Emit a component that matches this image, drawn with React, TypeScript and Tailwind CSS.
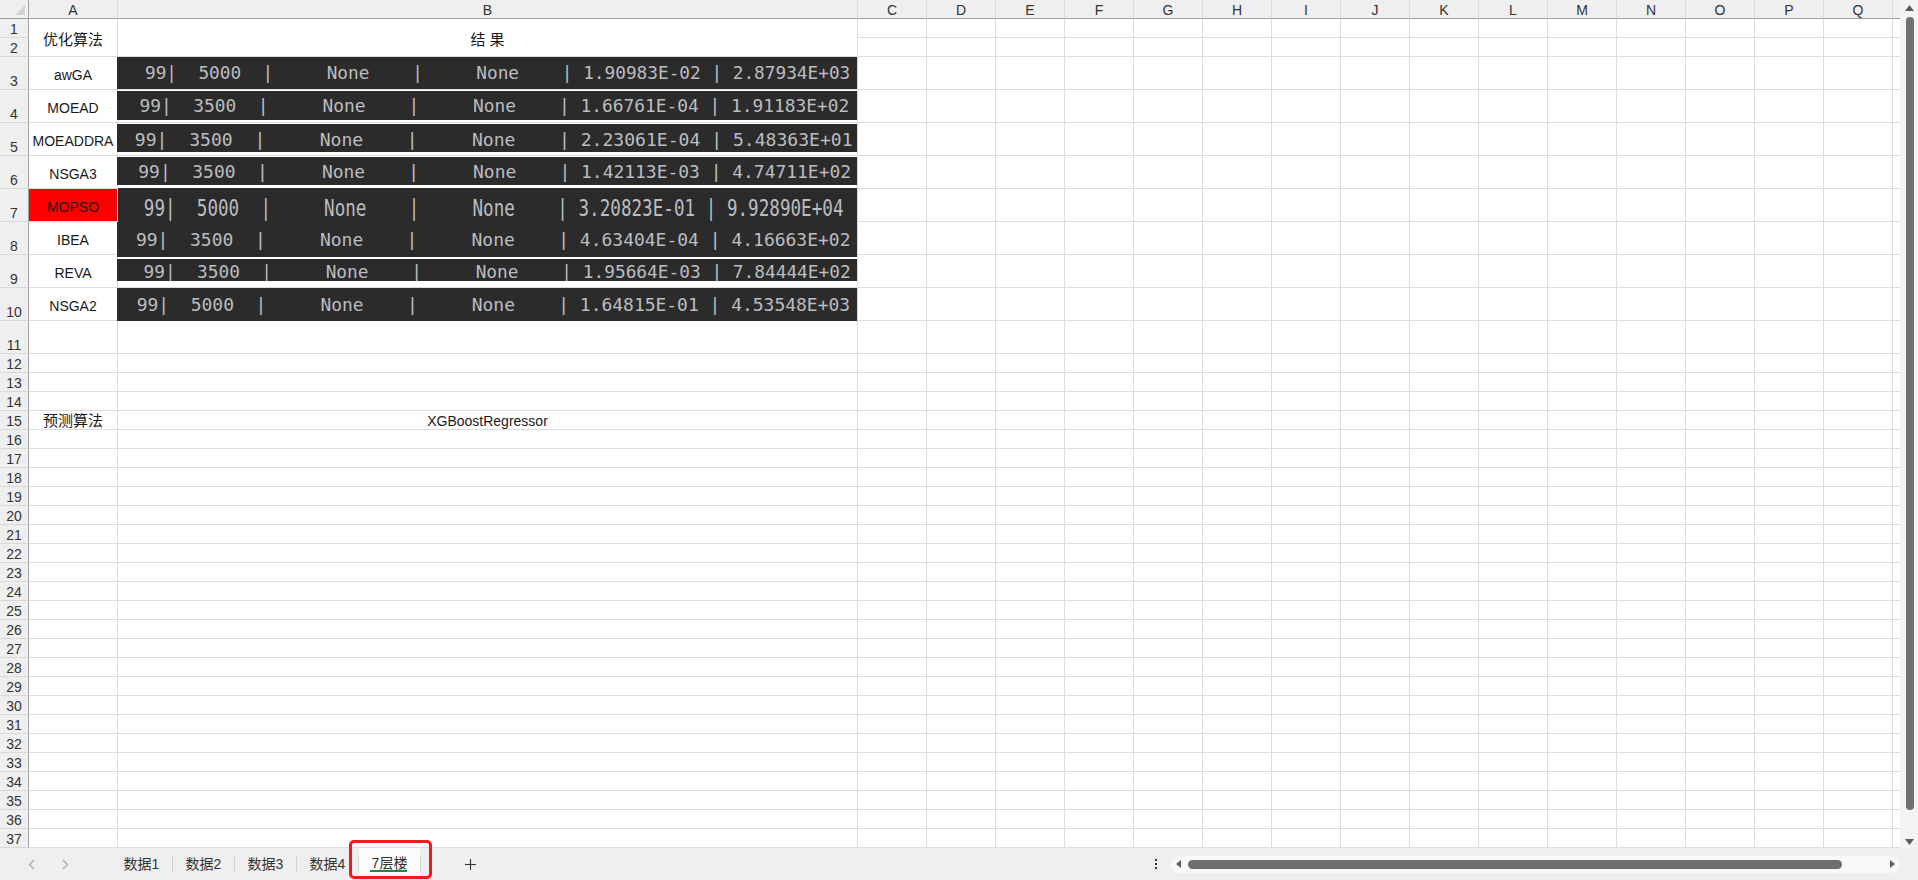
import React from "react";

const LETTERS = ["C", "D", "E", "F", "G", "H", "I", "J", "K", "L", "M", "N", "O", "P", "Q"];

const LABELS: Record<number, string> = {
  3: "awGA",
  4: "MOEAD",
  5: "MOEADDRA",
  6: "NSGA3",
  7: "MOPSO",
  8: "IBEA",
  9: "REVA",
  10: "NSGA2",
};

type Pic = { box: string; txt: string; pre: string; s: string };

const PICS: Pic[] = [
  {
    box: "left-[117px] top-[57px] w-[740px] h-[32px]",
    txt: "pl-[28px] pt-[8.2px]",
    pre: "text-[17.75px]",
    s: "99|  5000  |     None    |     None    | 1.90983E-02 | 2.87934E+03",
  },
  {
    box: "left-[117px] top-[91px] w-[740px] h-[29px]",
    txt: "pl-[22.6px] pt-[5.7px]",
    pre: "text-[17.88px]",
    s: "99|  3500  |     None    |     None    | 1.66761E-04 | 1.91183E+02",
  },
  {
    box: "left-[117px] top-[124px] w-[740px] h-[28px]",
    txt: "pl-[17.8px] pt-[6.8px]",
    pre: "text-[18.07px]",
    s: "99|  3500  |     None    |     None    | 2.23061E-04 | 5.48363E+01",
  },
  {
    box: "left-[117px] top-[157px] w-[740px] h-[28px]",
    txt: "pl-[21.3px] pt-[5.7px]",
    pre: "text-[17.94px]",
    s: "99|  3500  |     None    |     None    | 1.42113E-03 | 4.74711E+02",
  },
  {
    box: "left-[118px] top-[188px] w-[739px] h-[35px]",
    txt: "pl-[25.8px] pt-[11.8px]",
    pre: "text-[17.61px] scale-y-[1.3]",
    s: "99|  5000  |     None    |     None    | 3.20823E-01 | 9.92890E+04",
  },
  {
    box: "left-[117px] top-[222px] w-[740px] h-[35px]",
    txt: "pl-[18.9px] pt-[9.3px]",
    pre: "text-[17.99px]",
    s: "99|  3500  |     None    |     None    | 4.63404E-04 | 4.16663E+02",
  },
  {
    box: "left-[117px] top-[259px] w-[740px] h-[22px]",
    txt: "pl-[26.5px] pt-[4.1px]",
    pre: "text-[17.81px]",
    s: "99|  3500  |     None    |     None    | 1.95664E-03 | 7.84444E+02",
  },
  {
    box: "left-[117px] top-[288px] w-[740px] h-[33px]",
    txt: "pl-[19.7px] pt-[8.35px]",
    pre: "text-[17.97px]",
    s: "99|  5000  |     None    |     None    | 1.64815E-01 | 4.53548E+03",
  },
];

function ColHeader({ label }: { label: string }) {
  return (
    <div className="flex items-end justify-center pb-[1px] bg-[#efefef] border-r border-b border-r-[#d9d9d9] border-b-[#9e9e9e] text-[14px] leading-none text-[#333333]">
      {label}
    </div>
  );
}

function RowHeader({ n }: { n: number }) {
  return (
    <div className="flex items-end justify-center pb-[1px] bg-[#efefef] border-r border-b border-r-[#a3a3a3] border-b-[#d9d9d9] text-[14px] leading-none text-[#333333]">
      {n}
    </div>
  );
}

function Cell({ children, className }: { children?: React.ReactNode; className: string }) {
  return (
    <div
      className={
        "flex items-center justify-center whitespace-nowrap leading-none text-[#1a1a1a] border-r border-b border-[#dcdcdc] " +
        className
      }
    >
      {children}
    </div>
  );
}

function Chevron({ dir }: { dir: "l" | "r" }) {
  return (
    <svg width="8" height="11" viewBox="0 0 8 11" className="shrink-0">
      {dir === "l" ? (
        <polyline points="6,1 1.5,5.5 6,10" fill="none" stroke="#a8a8a8" strokeWidth="1.2" />
      ) : (
        <polyline points="2,1 6.5,5.5 2,10" fill="none" stroke="#a8a8a8" strokeWidth="1.2" />
      )}
    </svg>
  );
}

export default function App() {
  const cells: React.ReactNode[] = [];

  cells.push(
    <div
      key="corner"
      className="flex items-end justify-end pr-[3px] pb-[3px] bg-[#efefef] border-r border-b border-r-[#a3a3a3] border-b-[#9e9e9e]"
    >
      <svg width="10" height="10" viewBox="0 0 10 10">
        <polygon points="10,0 10,10 0,10" fill="#d3d3d3" />
      </svg>
    </div>
  );
  ["A", "B", ...LETTERS].forEach((l) => cells.push(<ColHeader key={"h" + l} label={l} />));
  cells.push(<div key="hx" className="bg-[#efefef] border-b border-b-[#9e9e9e]" />);

  for (let r = 1; r <= 37; r++) {
    cells.push(<RowHeader key={"r" + r} n={r} />);
    if (r === 1) {
      cells.push(
        <Cell key="a1" className="row-span-2 pt-[3px] text-[15px]">
          优化算法
        </Cell>
      );
      cells.push(
        <Cell key="b1" className="row-span-2 pt-[3px] text-[15px]">
          结 果
        </Cell>
      );
    } else if (r >= 3 && r <= 10) {
      cells.push(
        <Cell
          key={"a" + r}
          className={r === 7 ? "pt-[3px] text-[14px] bg-[#ff0000]" : "pt-[3px] text-[14px]"}
        >
          {LABELS[r]}
        </Cell>
      );
      cells.push(<Cell key={"b" + r} className="text-[14px]" />);
    } else if (r === 15) {
      cells.push(
        <Cell key="a15" className="pt-[1px] text-[15px]">
          预测算法
        </Cell>
      );
      cells.push(
        <Cell key="b15" className="pt-[1px] text-[14px]">
          XGBoostRegressor
        </Cell>
      );
    } else if (r !== 2) {
      cells.push(<Cell key={"a" + r} className="text-[14px]" />);
      cells.push(<Cell key={"b" + r} className="text-[14px]" />);
    }
    LETTERS.forEach((l) => cells.push(<Cell key={l + r} className="text-[14px]" />));
    cells.push(<div key={"x" + r} className="border-b border-[#dcdcdc] bg-white" />);
  }

  return (
    <div className="relative w-[1918px] h-[880px] overflow-hidden bg-white font-['Liberation_Sans','Noto_Sans_CJK_SC',sans-serif]">
      <div className="flex h-[848px]">
        <div className="relative w-[1900px] h-[848px] grid grid-cols-[29px_89px_740px_repeat(15,69px)_1fr] grid-rows-[19px_19px_19px_repeat(9,33px)_repeat(26,19px)]">
          {cells}
          {PICS.map((p, i) => (
            <div key={"pic" + i} className={"absolute overflow-hidden bg-[#2b2b2b] " + p.box}>
              <div className={p.txt}>
                <pre
                  className={
                    "m-0 whitespace-pre leading-none text-[#bbbdc1] font-['DejaVu_Sans_Mono',monospace] " + p.pre
                  }
                >
                  {p.s}
                </pre>
              </div>
            </div>
          ))}
        </div>
        <div className="w-[18px] h-[848px] bg-[#f3f3f3] flex flex-col items-center pt-[5px]">
          <svg width="9" height="6" viewBox="0 0 9 6" className="ml-[1px]">
            <polygon points="4.5,0 9,6 0,6" fill="#5c5c5c" />
          </svg>
          <div className="mt-[6px] ml-[1px] w-[8px] h-[793px] rounded-full bg-[#6f6f6f]" />
          <svg width="9" height="6" viewBox="0 0 9 6" className="mt-[29px] ml-[1px]">
            <polygon points="0,0 9,0 4.5,6" fill="#5c5c5c" />
          </svg>
        </div>
      </div>

      <div className="flex items-center h-[32px] bg-[#efefef] text-[14px] text-[#333333] leading-none">
        <div className="ml-[28px] flex items-center">
          <Chevron dir="l" />
        </div>
        <div className="ml-[25px] flex items-center">
          <Chevron dir="r" />
        </div>
        <div className="ml-[42px] flex items-center h-full">
          {["数据1", "数据2", "数据3", "数据4"].map((t) => (
            <React.Fragment key={t}>
              <div className="w-[61px] flex items-center justify-center">{t}</div>
              <div className="w-px h-[18px] bg-[#d4d4d4]" />
            </React.Fragment>
          ))}
          <div className="w-[61px] h-[29px] self-start flex flex-col items-center justify-center bg-[#fbfbfb] relative">
            <span className="pt-[1px]">7层楼</span>
            <span className="absolute bottom-[5px] left-[11px] w-[37px] h-[2px] bg-[#178a4a]" />
          </div>
          <div className="w-px h-[18px] bg-[#d4d4d4]" />
        </div>
        <svg width="11" height="11" viewBox="0 0 11 11" className="ml-[44px]">
          <line x1="5.5" y1="0" x2="5.5" y2="11" stroke="#333" strokeWidth="1.1" />
          <line x1="0" y1="5.5" x2="11" y2="5.5" stroke="#333" strokeWidth="1.1" />
        </svg>
        <div className="flex-1" />
        <div className="flex flex-col gap-[2px] mr-[14px]">
          <span className="w-[2px] h-[2px] bg-[#333]" />
          <span className="w-[2px] h-[2px] bg-[#333]" />
          <span className="w-[2px] h-[2px] bg-[#333]" />
        </div>
        <div className="w-[729px] h-[17px] rounded-full bg-[#f8f8f8] flex items-center pl-[5px] mr-[18px]">
          <svg width="5" height="8" viewBox="0 0 5 8">
            <polygon points="5,0 5,8 0,4" fill="#5f5f5f" />
          </svg>
          <div className="ml-[7px] w-[654px] h-[9px] rounded-full bg-[#6e6e6e]" />
          <svg width="5" height="8" viewBox="0 0 5 8" className="ml-[48px]">
            <polygon points="0,0 5,4 0,8" fill="#5f5f5f" />
          </svg>
        </div>
      </div>

      <div className="absolute left-[349px] top-[840px] w-[83px] h-[39px] border-[3px] border-[#ee1b1b] rounded-[5px]" />
    </div>
  );
}
